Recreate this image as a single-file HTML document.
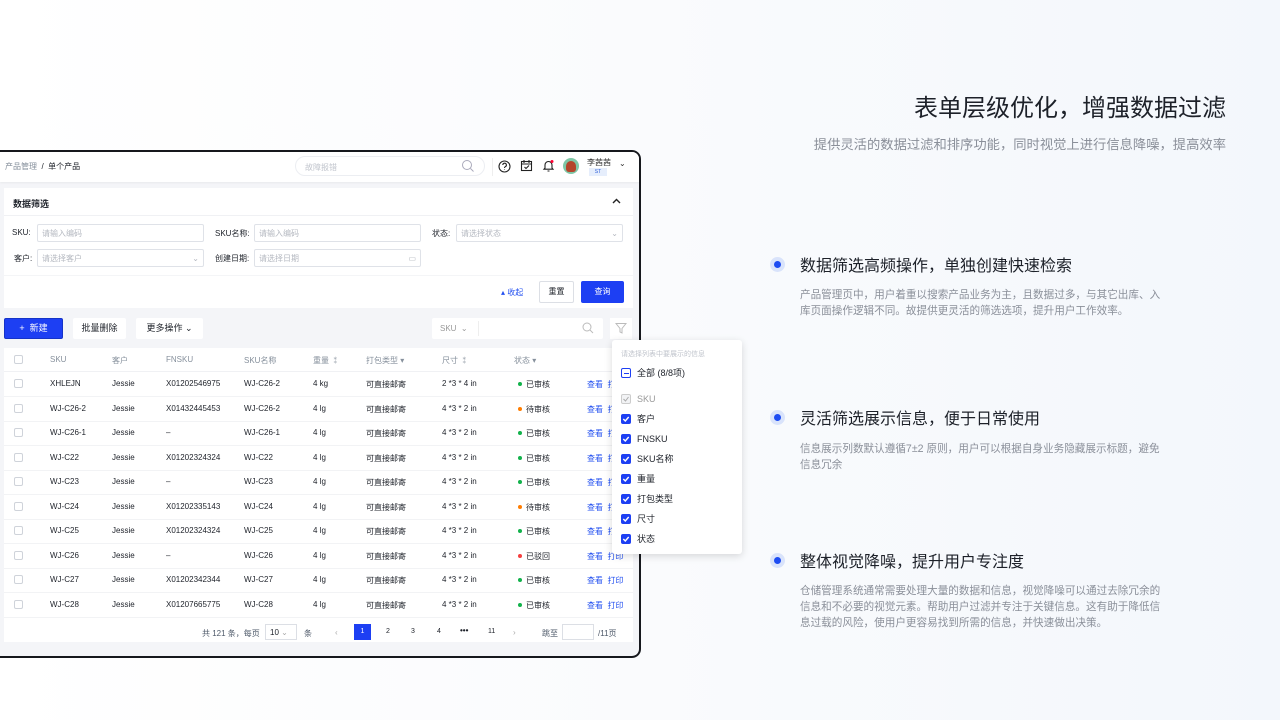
<!DOCTYPE html>
<html><head><meta charset="utf-8"><style>
*{margin:0;padding:0;box-sizing:border-box}
body{width:1280px;height:720px;overflow:hidden;position:relative;font-family:"Liberation Sans","Noto Sans CJK SC",sans-serif;background:linear-gradient(90deg,#fff 0%,#fafbfd 50%,#f3f7fc 100%);color:#1d2129}
.a{position:absolute;white-space:nowrap}
.frame{position:absolute;left:-10px;top:150px;width:651px;height:508px;border:2px solid #16181d;border-radius:9px;background:#f4f5f8;overflow:hidden}
.in{position:absolute;border:1px solid #dfe2e8;border-radius:2px;background:#fff;height:18px;font-size:8px;color:#b4b8c0;padding:4px 4px;line-height:9px}
.lb{font-size:8px;color:#1d2129}
.t{font-size:8px;color:#1d2129}
.cb{position:absolute;width:9px;height:9px;border:1px solid #cfd3da;border-radius:2px;background:#fff}
.ck{position:absolute;width:10px;height:10px;border-radius:2px;background:#1d3ff3}
.dot{display:inline-block;width:4px;height:4px;border-radius:2px;margin-right:4px;vertical-align:1px}
.bd{position:absolute;left:770px;width:15px;height:15px;border-radius:50%;background:#d9e3fb}
.bd::after{content:"";position:absolute;left:4px;top:4px;width:7px;height:7px;border-radius:50%;background:#1d4cf2}
.h{font-size:16px;color:#1d2129;left:800px}
.d{font-size:10.6px;color:#8a8f99;left:800px;line-height:16px;white-space:normal;width:368px}
.dl{position:absolute;left:637px;font-size:9px;line-height:10px}
</style></head><body>
<div class="a" style="right:54px;top:88px;font-size:24px;color:#1d2129">表单层级优化，增强数据过滤</div>
<div class="a" style="right:54px;top:134px;font-size:13.3px;color:#8a8f99">提供灵活的数据过滤和排序功能，同时视觉上进行信息降噪，提高效率</div>
<div class="bd" style="top:257px"></div><div class="a h" style="top:252px">数据筛选高频操作，单独创建快速检索</div>
<div class="a d" style="top:287px">产品管理页中，用户着重以搜索产品业务为主，且数据过多，与其它出库、入库页面操作逻辑不同。故提供更灵活的筛选选项，提升用户工作效率。</div>
<div class="bd" style="top:410px"></div><div class="a h" style="top:405px">灵活筛选展示信息，便于日常使用</div>
<div class="a d" style="top:441px">信息展示列数默认遵循7±2 原则，用户可以根据自身业务隐藏展示标题，避免信息冗余</div>
<div class="bd" style="top:553px"></div><div class="a h" style="top:548px">整体视觉降噪，提升用户专注度</div>
<div class="a d" style="top:583px">仓储管理系统通常需要处理大量的数据和信息，视觉降噪可以通过去除冗余的信息和不必要的视觉元素。帮助用户过滤并专注于关键信息。这有助于降低信息过载的风险，使用户更容易找到所需的信息，并快速做出决策。</div>

<div class="frame"></div>
<div class="a" style="left:0;top:152px;width:639px;height:30px;background:#fff;border-top-right-radius:7px;box-shadow:0 1px 2px rgba(0,0,0,.05)"></div>
<div class="a" style="left:5px;top:161px;font-size:8px;color:#86909c">产品管理 <span style="color:#1d2129">&nbsp;/&nbsp; 单个产品</span></div>
<div class="a" style="left:295px;top:156px;width:190px;height:20px;border:1px solid #eceef2;border-radius:10px;font-size:8px;color:#c0c4cc;padding:5px 9px">故障报错</div>
<svg class="a" style="left:461px;top:159px" width="14" height="14" viewBox="0 0 14 14" fill="none" stroke="#aab" stroke-width="1"><circle cx="6" cy="6" r="4.5"/><path d="M9.5 9.5l3 3"/></svg>
<div class="a" style="left:492px;top:158px;width:1px;height:18px;background:#eee"></div>
<svg class="a" style="left:498px;top:160px" width="13" height="13" viewBox="0 0 13 13" fill="none" stroke="#222" stroke-width="1.1"><circle cx="6.5" cy="6.5" r="5.5"/><path d="M4.8 5a1.8 1.8 0 1 1 2.4 1.7c-.6.3-.7.6-.7 1.3M6.5 9.3v.4"/></svg>
<svg class="a" style="left:520px;top:159px" width="13" height="13" viewBox="0 0 13 13" fill="none" stroke="#222" stroke-width="1.1"><rect x="1.5" y="2.5" width="10" height="9"/><path d="M4 1v3M9 1v3M1.5 5h10M4.5 8l1.5 1.5 3-3"/></svg>
<svg class="a" style="left:542px;top:159px" width="13" height="14" viewBox="0 0 13 14" fill="none" stroke="#222" stroke-width="1.1"><path d="M3 9V6a3.5 3.5 0 0 1 7 0v3l1 1.2H2zM5.5 12h2"/><circle cx="10" cy="2.5" r="1.5" fill="#f03" stroke="none"/></svg>
<div class="a" style="left:563px;top:158px;width:16px;height:16px;border-radius:50%;background:#7fc7a7"><div style="margin:3px 0 0 3px;width:10px;height:11px;border-radius:5px 5px 3px 3px;background:#b5452c"></div></div>
<div class="a" style="left:587px;top:157px;font-size:8px;color:#333">李茜茜</div>
<div class="a" style="left:589px;top:168px;width:18px;height:8px;background:#e6eefc;color:#2a5bd7;font-size:5px;text-align:center;line-height:8px">ST</div>
<div class="a" style="left:619px;top:159px;font-size:8px;color:#333">⌄</div>

<div class="a" style="left:4px;top:188px;width:629px;height:120px;background:#fff"></div>
<div class="a" style="left:13px;top:197px;font-size:9px;font-weight:bold;color:#1d2129">数据筛选</div>
<svg class="a" style="left:612px;top:198px" width="9" height="7" viewBox="0 0 9 7" fill="none" stroke="#222" stroke-width="1.4"><path d="M1 5l3.5-3.5L8 5"/></svg>
<div class="a" style="left:4px;top:215px;width:629px;height:1px;background:#f0f1f4"></div>
<div class="a lb" style="left:12px;top:228px">SKU:</div><div class="in" style="left:37px;top:224px;width:167px">请输入编码</div>
<div class="a lb" style="left:215px;top:228px">SKU名称:</div><div class="in" style="left:254px;top:224px;width:167px">请输入编码</div>
<div class="a lb" style="left:432px;top:228px">状态:</div><div class="in" style="left:456px;top:224px;width:167px">请选择状态<span style="float:right">⌄</span></div>
<div class="a lb" style="left:14px;top:253px">客户:</div><div class="in" style="left:37px;top:249px;width:167px">请选择客户<span style="float:right">⌄</span></div>
<div class="a lb" style="left:215px;top:253px">创建日期:</div><div class="in" style="left:254px;top:249px;width:167px">请选择日期<span style="float:right">▭</span></div>
<div class="a" style="left:4px;top:275px;width:629px;height:1px;background:#f4f5f7"></div>
<div class="a" style="left:501px;top:287px;font-size:8px;color:#2350f0">▴ 收起</div>
<div class="a" style="left:539px;top:281px;width:35px;height:22px;border:1px solid #dcdfe5;border-radius:2px;font-size:8px;text-align:center;line-height:20px">重置</div>
<div class="a" style="left:581px;top:281px;width:43px;height:22px;background:#1d3ff3;border-radius:2px;font-size:8px;color:#fff;text-align:center;line-height:22px">查询</div>

<div class="a" style="left:4px;top:318px;width:59px;height:21px;background:#1d3ff3;border:1px solid #1533c8;border-radius:2px;font-size:9px;color:#fff;text-align:center;line-height:19px">+&nbsp; 新建</div>
<div class="a" style="left:73px;top:318px;width:53px;height:21px;background:#fff;border-radius:2px;font-size:9px;text-align:center;line-height:21px">批量删除</div>
<div class="a" style="left:136px;top:318px;width:67px;height:21px;background:#fff;border-radius:2px;font-size:9px;text-align:center;line-height:21px">更多操作 ⌄</div>
<div class="a" style="left:432px;top:318px;width:171px;height:21px;background:#fff;border-radius:2px;font-size:8px;color:#999;padding:6px 8px">SKU &nbsp;⌄</div>
<div class="a" style="left:478px;top:321px;width:1px;height:15px;background:#eee"></div>
<svg class="a" style="left:582px;top:322px" width="12" height="12" viewBox="0 0 12 12" fill="none" stroke="#bbb"><circle cx="5" cy="5" r="4"/><path d="M8 8l3 3"/></svg>
<div class="a" style="left:610px;top:318px;width:22px;height:21px;background:#fff"></div>
<svg class="a" style="left:615px;top:322px" width="12" height="12" viewBox="0 0 12 12" fill="none" stroke="#bbb"><path d="M1 1.5h10L7 6.5V11L5 10V6.5z"/></svg>

<div class="a" style="left:4px;top:348px;width:629px;height:294px;background:#fff"></div>
<div class="a" style="left:4px;top:348px;width:629px;height:24px;border-bottom:1px solid #f0f1f4"></div>
<div class="cb" style="left:14px;top:355px"></div>
<div class="a t" style="top:355px;left:50px;color:#86909c">SKU</div>
<div class="a t" style="top:355px;left:112px;color:#86909c">客户</div>
<div class="a t" style="top:355px;left:166px;color:#86909c">FNSKU</div>
<div class="a t" style="top:355px;left:244px;color:#86909c">SKU名称</div>
<div class="a t" style="top:355px;left:313px;color:#86909c">重量 ⁑</div>
<div class="a t" style="top:355px;left:366px;color:#86909c">打包类型 ▾</div>
<div class="a t" style="top:355px;left:442px;color:#86909c">尺寸 ⁑</div>
<div class="a t" style="top:355px;left:514px;color:#86909c">状态 ▾</div>
<div id="rows"></div>
<script>
var d=[["XHLEJN","X01202546975","WJ-C26-2","4 kg","2 *3 * 4 in","g"],["WJ-C26-2","X01432445453","WJ-C26-2","4 lg","4 *3 * 2 in","o"],["WJ-C26-1","–","WJ-C26-1","4 lg","4 *3 * 2 in","g"],["WJ-C22","X01202324324","WJ-C22","4 lg","4 *3 * 2 in","g"],["WJ-C23","–","WJ-C23","4 lg","4 *3 * 2 in","g"],["WJ-C24","X01202335143","WJ-C24","4 lg","4 *3 * 2 in","o"],["WJ-C25","X01202324324","WJ-C25","4 lg","4 *3 * 2 in","g"],["WJ-C26","–","WJ-C26","4 lg","4 *3 * 2 in","r"],["WJ-C27","X01202342344","WJ-C27","4 lg","4 *3 * 2 in","g"],["WJ-C28","X01207665775","WJ-C28","4 lg","4 *3 * 2 in","g"]];
var c={g:["#12b24b","已审核"],o:["#ff7d00","待审核"],r:["#f53f3f","已驳回"]},h="";
d.forEach(function(r,i){var y=372+i*24.5,ty=y+7;
h+='<div class="a" style="left:4px;top:'+(y+24)+'px;width:629px;height:1px;background:#f2f3f5"></div>';
h+='<div class="cb" style="left:14px;top:'+(y+7)+'px"></div>';
h+='<div class="a t" style="top:'+ty+'px;left:50px">'+r[0]+'</div><div class="a t" style="top:'+ty+'px;left:112px">Jessie</div><div class="a t" style="top:'+ty+'px;left:166px">'+r[1]+'</div><div class="a t" style="top:'+ty+'px;left:244px">'+r[2]+'</div><div class="a t" style="top:'+ty+'px;left:313px">'+r[3]+'</div><div class="a t" style="top:'+ty+'px;left:366px">可直接邮寄</div><div class="a t" style="top:'+ty+'px;left:442px">'+r[4]+'</div><div class="a t" style="top:'+ty+'px;left:518px"><span class="dot" style="background:'+c[r[5]][0]+'"></span>'+c[r[5]][1]+'</div><div class="a t" style="top:'+ty+'px;left:587px;color:#2350f0">查看 &nbsp;打印</div>';});
document.getElementById('rows').innerHTML=h;
</script>
<div class="a t" style="top:628px;left:202px;color:#4e5969">共 121 条，每页</div>
<div class="a" style="left:265px;top:624px;width:32px;height:16px;border:1px solid #dcdfe5;font-size:8px;padding:3px 4px">10 <span style="color:#aaa">⌄</span></div>
<div class="a t" style="top:628px;left:304px;color:#4e5969">条</div>
<div class="a t" style="top:628px;left:335px;color:#aaa">‹</div>
<div class="a" style="left:354px;top:624px;width:17px;height:16px;background:#1d3ff3;color:#fff;font-size:7px;text-align:center;line-height:16px">1</div>
<div class="a t" style="top:628px;left:386px;font-size:7px">2</div>
<div class="a t" style="top:628px;left:411px;font-size:7px">3</div>
<div class="a t" style="top:628px;left:437px;font-size:7px">4</div>
<div class="a t" style="top:626px;left:460px;font-weight:bold">•••</div>
<div class="a t" style="top:628px;left:488px;font-size:7px">11</div>
<div class="a t" style="top:628px;left:513px;color:#aaa">›</div>
<div class="a t" style="top:628px;left:542px;color:#4e5969">跳至</div>
<div class="a" style="left:562px;top:624px;width:32px;height:16px;border:1px solid #dcdfe5"></div>
<div class="a t" style="top:628px;left:598px;color:#4e5969">/11页</div>

<div class="a" style="left:612px;top:340px;width:130px;height:214px;background:#fff;border-radius:3px;box-shadow:0 2px 8px rgba(0,0,0,.15)"></div>
<div class="a" style="left:621px;top:349px;font-size:7px;color:#c0c4cc">请选择列表中要展示的信息</div>
<div class="a" style="left:621px;top:368px;width:10px;height:10px;border:1px solid #1d3ff3;border-radius:2px"><div style="margin:3.5px 1.5px;height:1.5px;background:#1d3ff3"></div></div>
<div class="dl a" style="top:368px">全部 (8/8项)</div>
<div class="a" style="left:621px;top:394px;width:10px;height:10px;border:1px solid #ccc;border-radius:2px;background:#f2f3f5"><svg width="8" height="8" viewBox="0 0 8 8" style="display:block"><path d="M1.5 4l2 2 3-4" fill="none" stroke="#aaa" stroke-width="1"/></svg></div>
<div class="dl a" style="top:394px;color:#999">SKU</div>
<div id="dd"></div>
<script>
var l=["客户","FNSKU","SKU名称","重量","打包类型","尺寸","状态"],s="";
l.forEach(function(t,i){var y=414+i*20;s+='<div class="ck" style="left:621px;top:'+y+'px"><svg width="10" height="10" viewBox="0 0 10 10" style="display:block"><path d="M2.3 5l2 2 3.4-4" fill="none" stroke="#fff" stroke-width="1.4"/></svg></div><div class="dl a" style="top:'+y+'px">'+t+'</div>';});
document.getElementById('dd').innerHTML=s;
</script>
</body></html>
